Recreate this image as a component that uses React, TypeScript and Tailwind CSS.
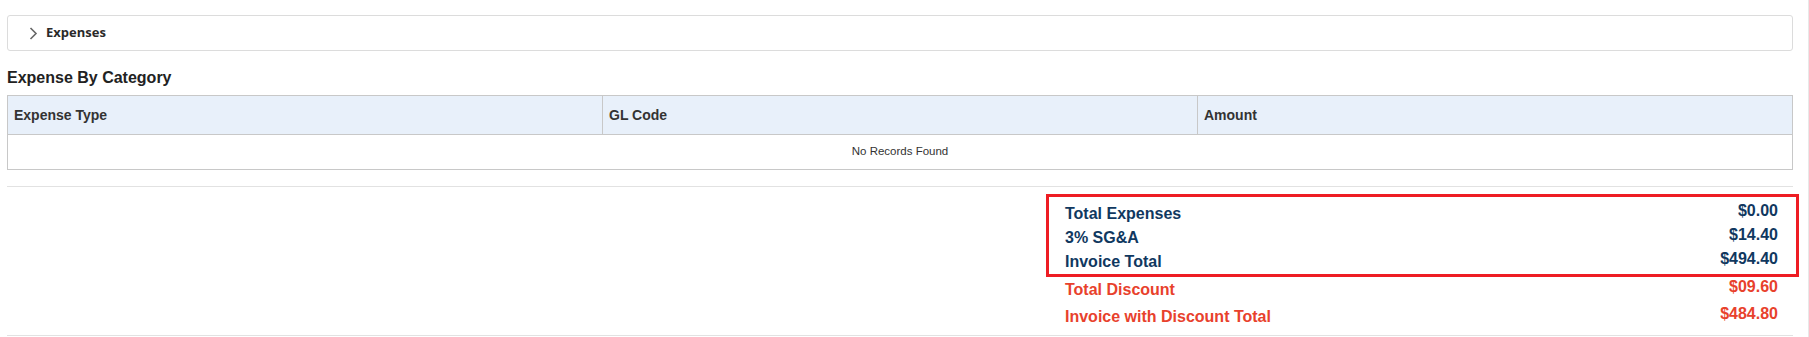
const TOTALS = [
  { label: 'Total Expenses', value: '$0.00' },
  { label: '3% SG&A', value: '$14.40' },
  { label: 'Invoice Total', value: '$494.40' },
];

function TotalRow({ label, value, red }: { label: string; value: string; red?: boolean }) {
  return (
    <div className={`flex items-start justify-between font-bold text-[16px] ${red ? 'text-[#e8412c]' : 'text-[#10385f]'}`}>
      <span className="leading-[24px]">{label}</span>
      <span className="leading-[18px]">{value}</span>
    </div>
  );
}

export default function App() {
  return (
    <div className="flex w-full h-[337px] overflow-hidden bg-white" style={{ fontFamily: '"Liberation Sans", Arial, sans-serif' }}>
      <div className="flex-1 pl-[7px] pr-[15px] pt-[15px]">
        <button
          type="button"
          className="flex items-center w-full h-[36px] border border-[#dcdcdc] rounded-[3px] pl-[21px] text-left"
        >
          <svg width="9" height="13" viewBox="0 0 9 13" className="shrink-0">
            <polyline points="1.5,1 7,6.5 1.5,12" fill="none" stroke="#666" strokeWidth="1.6" />
          </svg>
          <span className="ml-[8px] text-[13px] font-bold text-[#2a2a2a]" style={{ fontFamily: '"Open Sans", sans-serif' }}>
            Expenses
          </span>
        </button>

        <h2 className="mt-[17px] mb-[7px] text-[16px] leading-[20px] font-bold text-[#222]">Expense By Category</h2>

        <table className="w-full table-fixed border-collapse border border-[#c8c8c8] text-[#333]">
          <thead>
            <tr className="bg-[#e8f0fa] h-[39px]">
              <th className="border border-[#c8c8c8] px-[6px] text-left text-[14px] font-bold">Expense Type</th>
              <th className="border border-[#c8c8c8] px-[6px] text-left text-[14px] font-bold">GL Code</th>
              <th className="border border-[#c8c8c8] px-[6px] text-left text-[14px] font-bold">Amount</th>
            </tr>
          </thead>
          <tbody>
            <tr className="h-[35px]">
              <td colSpan={3} className="text-center text-[11.5px] text-[#333]">
                No Records Found
              </td>
            </tr>
          </tbody>
        </table>

        <div className="mt-[16px] border-t border-[#e2e2e2]" />

        <div className="ml-auto mr-[-6px] w-[753px] mt-[7px]">
          <div className="border-[3px] border-[#ee1d23] pl-[16px] pr-[18px] pt-[5px]">
            {TOTALS.map((t) => (
              <TotalRow key={t.label} label={t.label} value={t.value} />
            ))}
          </div>
          <div className="pl-[19px] pr-[21px] pt-[1px]">
            <TotalRow label="Total Discount" value="$09.60" red />
            <div className="mt-[3px]">
              <TotalRow label="Invoice with Discount Total" value="$484.80" red />
            </div>
          </div>
        </div>

        <div className="mt-[6px] border-t border-[#e2e2e2]" />
      </div>
      <div className="w-px bg-[#e8e8e8]" />
    </div>
  );
}
